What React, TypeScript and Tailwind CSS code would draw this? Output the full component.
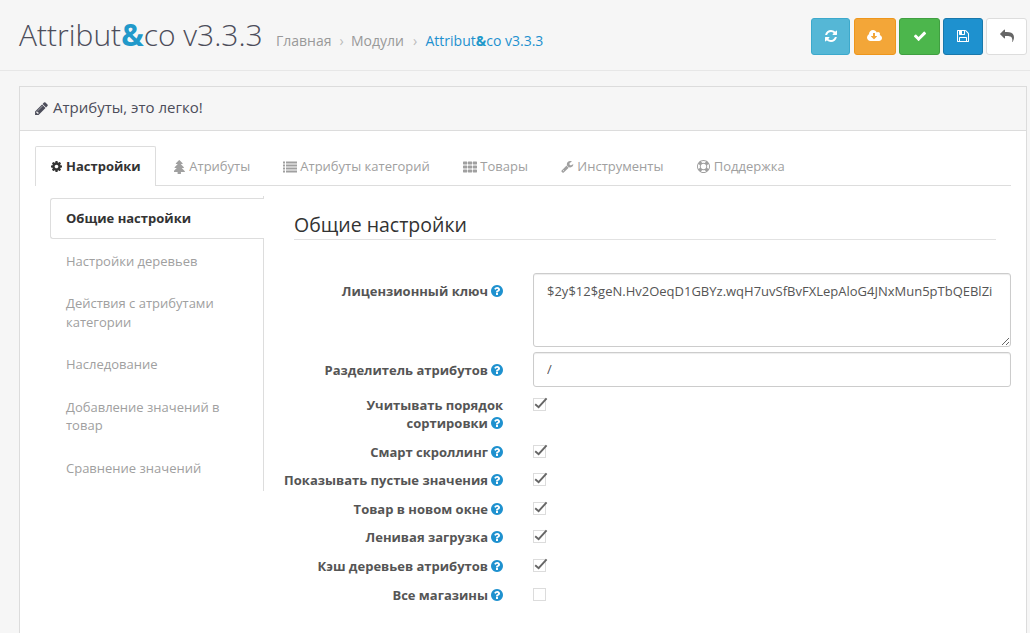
import type { ReactNode } from "react";

const paths = {
  refresh:
    "M1639 1056q0 5-1 7-64 268-268 434.500t-478 166.500q-146 0-282.500-55t-243.500-157l-129 129q-19 19-45 19t-45-19-19-45v-448q0-26 19-45t45-19h448q26 0 45 19t19 45-19 45l-137 137q71 66 161 102t187 36q134 0 250-65t186-179q11-17 53-117 8-23 30-23h192q13 0 22.500 9.500t9.500 22.500zm25-800v448q0 26-19 45t-45 19h-448q-26 0-45-19t-19-45 19-45l138-138q-148-137-349-137-134 0-250 65t-186 179q-11 17-53 117-8 23-30 23h-199q-13 0-22.500-9.500t-9.500-22.500v-7q65-268 270-434.500t480-166.500q146 0 284 55.500t245 156.500l130-129q19-19 45-19t45 19 19 45z",
  download:
    "M1216 928q0-14-9-23t-23-9h-224v-352q0-13-9.500-22.500t-22.500-9.500h-192q-13 0-22.500 9.500t-9.500 22.500v352h-224q-13 0-22.500 9.500t-9.500 22.500q0 14 9 23l352 352q9 9 23 9t23-9l351-351q10-12 10-24zm640 224q0 159-112.500 271.500t-271.500 112.500h-1088q-185 0-316.500-131.500t-131.500-316.500q0-130 70-240t188-165q-2-30-2-43 0-212 150-362t362-150q156 0 285.500 87t188.500 231q71-62 166-62 106 0 181 75t75 181q0 76-41 138 130 31 213.500 135.500t83.500 238.500z",
  check:
    "M1671 566q0 40-28 68l-724 724-136 136q-28 28-68 28t-68-28l-136-136-362-362q-28-28-28-68t28-68l136-136q28-28 68-28t68 28l294 295 656-657q28-28 68-28t68 28l136 136q28 28 28 68z",
  save: "M512 1536h768v-384h-768v384zm896 0h128v-896q0-14-10-38.500t-20-34.500l-281-281q-10-10-34-20t-39-10v416q0 40-28 68t-68 28h-576q-40 0-68-28t-28-68v-416h-128v1280h128v-416q0-40 28-68t68-28h832q40 0 68 28t28 68v416zm-384-928v-320q0-13-9.500-22.500t-22.500-9.500h-192q-13 0-22.500 9.500t-9.500 22.500v320q0 13 9.500 22.500t22.500 9.500h192q13 0 22.500-9.500t9.500-22.500zm640 32v928q0 40-28 68t-68 28h-1344q-40 0-68-28t-28-68v-1344q0-40 28-68t68-28h928q40 0 88 20t76 48l280 280q28 28 48 76t20 88z",
  reply:
    "M1792 1120q0 166-127 451-3 7-10.500 24t-13.500 30-13 22q-12 17-28 17-15 0-23.500-10t-8.500-25q0-9 2.500-26.500t2.500-23.500q5-68 5-123 0-101-17.500-181t-48.500-138.500-80-101-105.500-69.500-133-42.500-154-21.500-175.500-6h-224v256q0 26-19 45t-45 19-45-19l-512-512q-19-19-19-45t19-45l512-512q19-19 45-19t45 19 19 45v256h224q713 0 875 403 53 134 53 333z",
  pencil:
    "M491 1536l91-91-235-235-91 91v107h128v128h107zm523-928q0-22-22-22-10 0-17 7l-542 542q-7 7-7 17 0 22 22 22 10 0 17-7l542-542q7-7 7-17zm-54-192l416 416-832 832h-416v-416zm683 96q0 53-37 90l-166 166-416-416 166-165q36-38 90-38 53 0 91 38l235 234q37 39 37 91z",
  cog: "M1152 896q0-106-75-181t-181-75-181 75-75 181 75 181 181 75 181-75 75-181zm512-109v222q0 12-8 23t-20 13l-185 28q-19 54-39 91 35 50 107 138 10 12 10 25t-9 23q-27 37-99 108t-94 71q-12 0-26-9l-138-108q-44 23-91 38-16 136-29 186-7 28-36 28h-222q-14 0-24.500-8.500t-11.500-21.500l-28-184q-49-16-90-37l-141 107q-10 9-25 9-14 0-25-11-126-114-165-168-7-10-7-23 0-12 8-23 15-21 51-66.500t54-70.500q-27-50-41-99l-183-27q-13-2-21-12.500t-8-23.500v-222q0-12 8-23t19-13l186-28q14-46 39-92-40-57-107-138-10-12-10-24 0-10 9-23 26-36 98.500-107.500t94.500-71.500q13 0 26 10l138 107q44-23 91-38 16-136 29-186 7-28 36-28h222q14 0 24.500 8.500t11.500 21.500l28 184q49 16 90 37l142-107q9-9 24-9 13 0 25 10 129 119 165 170 7 8 7 22 0 12-8 23-15 21-51 66.500t-54 70.500q26 50 41 98l183 28q13 2 21 12.500t8 23.500z",
  tree: "M1600 1472q0 26-19 45t-45 19h-462q1 17 6 87.500t5 108.500q0 25-18 42.500t-43 17.500h-320q-25 0-43-17.500t-18-42.500q0-38 5-108.500t6-87.500h-462q-26 0-45-19t-19-45 19-45l402-403h-229q-26 0-45-19t-19-45 19-45l402-403h-197q-26 0-45-19t-19-45 19-45l384-384q19-19 45-19t45 19l384 384q19 19 19 45t-19 45-45 19h-197l402 403q19 19 19 45t-19 45-45 19h-229l402 403q19 19 19 45z",
  list: "M0 256h256v256h-256zM384 256h1408v256h-1408zM0 640h256v256h-256zM384 640h1408v256h-1408zM0 1024h256v256h-256zM384 1024h1408v256h-1408zM0 1408h256v256h-256zM384 1408h1408v256h-1408z",
  grid: "M60 256h420q60 0 60 60v264q0 60-60 60h-420q-60 0-60-60v-264q0-60 60-60zM686 256h420q60 0 60 60v264q0 60-60 60h-420q-60 0-60-60v-264q0-60 60-60zM1312 256h420q60 0 60 60v264q0 60-60 60h-420q-60 0-60-60v-264q0-60 60-60zM60 768h420q60 0 60 60v264q0 60-60 60h-420q-60 0-60-60v-264q0-60 60-60zM686 768h420q60 0 60 60v264q0 60-60 60h-420q-60 0-60-60v-264q0-60 60-60zM1312 768h420q60 0 60 60v264q0 60-60 60h-420q-60 0-60-60v-264q0-60 60-60zM60 1280h420q60 0 60 60v264q0 60-60 60h-420q-60 0-60-60v-264q0-60 60-60zM686 1280h420q60 0 60 60v264q0 60-60 60h-420q-60 0-60-60v-264q0-60 60-60zM1312 1280h420q60 0 60 60v264q0 60-60 60h-420q-60 0-60-60v-264q0-60 60-60z",
  wrench:
    "M448 1472q0-26-19-45t-45-19-45 19-19 45 19 45 45 19 45-19 19-45zm644-420l-682 682q-37 37-90 37-52 0-91-37l-106-108q-38-36-38-90 0-53 38-91l681-681q39 98 114.500 173.500t173.500 114.500zm634-435q0 39-23 106-47 134-164.500 217.500t-258.500 83.500q-185 0-316.500-131.500t-131.500-316.500 131.500-316.500 316.500-131.500q58 0 121.500 16.500t107.500 46.500q16 11 16 28t-16 28l-293 169v224l193 107q5-3 79-48.500t135.500-81 70.500-35.500q15 0 23.500 10t8.500 25z",
  ring: "M896 0q182 0 348 71t286 191 191 286 71 348-71 348-191 286-286 191-348 71-348-71-286-191-191-286-71-348 71-348 191-286 286-191 348-71zm0 128q-190 0-361 90l194 194q82-28 167-28t167 28l194-194q-171-90-361-90zm-678 1129l194-194q-28-82-28-167t28-167l-194-194q-90 171-90 361t90 361zm678 407q190 0 361-90l-194-194q-82 28-167 28t-167-28l-194 194q171 90 361 90zm0-384q159 0 271.500-112.500t112.500-271.500-112.500-271.500-271.500-112.500-271.500 112.500-112.500 271.500 112.500 271.500 271.500 112.500zm484-217l194 194q90-171 90-361t-90-361l-194 194q28 82 28 167t-28 167z",
  question:
    "M1024 1376v-192q0-14-9-23t-23-9h-192q-14 0-23 9t-9 23v192q0 14 9 23t23 9h192q14 0 23-9t9-23zm256-672q0-88-55.500-163t-138.500-116-170-41q-243 0-371 213-15 24 8 42l132 100q7 6 19 6 16 0 25-12 53-68 86-92 34-24 86-24 48 0 85.500 26t37.500 59q0 38-20 61t-68 45q-63 28-115.500 86.500t-52.500 125.500v36q0 14 9 23t23 9h192q14 0 23-9t9-23q0-19 21.500-49.500t54.500-49.500q32-18 49-28.500t46-35 44.500-48 28-60.500 12.500-81zm384 192q0 209-103 385.500t-279.500 279.500-385.500 103-385.500-103-279.500-279.500-103-385.500 103-385.500 279.500-279.500 385.500-103 385.500 103 279.500 279.500 103 385.500z",
};

type IconName = keyof typeof paths;

function Icon({ name, box = "0 0 1792 1792", className = "" }: { name: IconName; box?: string; className?: string }) {
  return (
    <svg viewBox={box} fill="currentColor" className={`shrink-0 ${className}`}>
      <path d={paths[name]} />
    </svg>
  );
}

const actions: { icon: IconName; box: string; size: string; tone: string }[] = [
  { icon: "refresh", box: "128 0 1536 1792", size: "h-[14px] w-[12px]", tone: "w-[39px] bg-[#55b7d6] border-[#3ca9cc] text-white" },
  { icon: "download", box: "-64 0 1920 1792", size: "h-[14px] w-[15px] mr-px", tone: "w-[42px] bg-[#f3a638] border-[#ee961c] text-white" },
  { icon: "check", box: "0 0 1792 1792", size: "h-[14px] w-[14px]", tone: "w-[41px] bg-[#4cb64c] border-[#409f41] text-white" },
  { icon: "save", box: "128 0 1536 1792", size: "h-[14px] w-[12px]", tone: "w-[40px] bg-[#1e91cf] border-[#1978ab] text-white" },
  { icon: "reply", box: "0 0 1792 1792", size: "h-[14px] w-[14px]", tone: "w-[41px] bg-white border-[#dddddd] text-[#666666]" },
];
const actionGaps = ["", "ml-1", "ml-[3px]", "ml-[3px]", "ml-[3px]"];

const tabs: { label: string; icon: IconName; box: string; size: string; width: string }[] = [
  { label: "Атрибуты", icon: "tree", box: "192 0 1408 1792", size: "h-[14px] w-[11px] mr-[4px]", width: "w-[109px]" },
  { label: "Атрибуты категорий", icon: "list", box: "0 64 1792 1792", size: "h-[14px] w-[14px] mr-[3px]", width: "w-[180px]" },
  { label: "Товары", icon: "grid", box: "0 64 1792 1792", size: "h-[14px] w-[14px] mr-[3px]", width: "w-[98px]" },
  { label: "Инструменты", icon: "wrench", box: "64 0 1728 1792", size: "h-[13px] w-[13px] mr-[3px]", width: "w-[136px]" },
  { label: "Поддержка", icon: "ring", box: "0 0 1792 1792", size: "h-[13px] w-[13px] mr-[3.5px]", width: "w-[121px]" },
];

const sections: { lines: string[]; height: string }[] = [
  { lines: ["Настройки деревьев"], height: "h-[42px]" },
  { lines: ["Действия с атрибутами", "категории"], height: "h-[61px]" },
  { lines: ["Наследование"], height: "h-[42.7px]" },
  { lines: ["Добавление значений в", "товар"], height: "h-[61.3px]" },
  { lines: ["Сравнение значений"], height: "h-[41px]" },
];

const toggles: { label: string; height: string; checked: boolean }[] = [
  { label: "Смарт скроллинг", height: "h-[28px]", checked: true },
  { label: "Показывать пустые значения", height: "h-[29px]", checked: true },
  { label: "Товар в новом окне", height: "h-[28px]", checked: true },
  { label: "Ленивая загрузка", height: "h-[29px]", checked: true },
  { label: "Кэш деревьев атрибутов", height: "h-[29px]", checked: true },
  { label: "Все магазины", height: "h-[28px]", checked: false },
];

function Help() {
  return <Icon name="question" box="128 128 1536 1536" className="-mr-[0.4px] ml-[3.4px] inline-block size-3 align-[-1.3px] text-[#1e91cf]" />;
}

function Label({ children }: { children: ReactNode }) {
  return (
    <div className="w-[240px] shrink-0 text-right text-[13px] leading-[18px] font-bold whitespace-nowrap text-[#555555]">
      {children}
      <Help />
    </div>
  );
}

function Check({ checked }: { checked: boolean }) {
  return (
    <svg viewBox="0 0 16 16" className="ml-[30px] size-4 shrink-0" fill="none">
      <rect x="0.5" y="2.5" width="12" height="12" fill="#fff" stroke="#dcdcdc" />
      {checked && <path d="M2.2 8.3 5.6 11.2 13.6 2.3" stroke="#666" strokeWidth="1.9" />}
    </svg>
  );
}

export default function App() {
  return (
    <div className="flex h-[633px] w-[1030px] flex-col overflow-hidden bg-[#f6f6f6] font-['Open_Sans','Noto_Sans',sans-serif] text-[13px] text-[#666666]">
      <header className="flex h-[71px] shrink-0 border-b border-[#e7e7e7] pr-[3px] pl-[19px]">
        <h1 className="w-[257px] pt-[15px] text-[30px] leading-[40px] font-light whitespace-nowrap text-[#4c4d5a]">
          Attribut<b className="font-bold text-[#2199ca]">&amp;</b>co v3.3.3
        </h1>
        <nav className="flex pt-[31px] text-[14px] leading-5 whitespace-nowrap text-[#999999]">
          <span className="w-[56px]">Главная</span>
          <span className="w-[19px] text-center text-[#bbbbbb]">›</span>
          <span className="w-[54px]">Модули</span>
          <span className="w-[20px] text-center text-[#bbbbbb]">›</span>
          <span className="ml-[0.5px] text-[#1e91cf]">
            Attribut<b className="text-[#2199ca]">&amp;</b>co v3.3.3
          </span>
        </nav>
        <div className="ml-auto flex pt-[18px]">
          {actions.map((a, i) => (
            <button key={a.icon} className={`flex h-[37px] items-center justify-center rounded-[3px] border pb-px ${a.tone} ${actionGaps[i]}`}>
              <Icon name={a.icon} box={a.box} className={a.size} />
            </button>
          ))}
        </div>
      </header>

      <main className="mt-[15px] ml-[19px] flex w-[1008px] flex-1 flex-col border border-b-0 border-[#dcdcdc] bg-white">
        <div className="flex h-[44px] shrink-0 items-center border-b border-[#dcdcdc] bg-[#f6f6f6] pl-[15px] text-[15px] text-[#4c4d5a]">
          <Icon name="pencil" box="128 0 1536 1792" className="mr-[5px] mb-px h-[15px] w-[13px]" />
          <h3 className="pb-[2px]">Атрибуты, это легко!</h3>
        </div>

        <div className="mt-[15px] mr-[15px] ml-[15px] flex h-[40px] shrink-0 text-[#a0a0a0]">
          <div className="flex w-[121px] items-center rounded-t-[2px] border border-b-0 border-[#dddddd] pl-[15px] font-bold whitespace-nowrap text-[#333333]">
            <Icon name="cog" box="128 0 1536 1792" className="mr-1 h-[13px] w-[11px]" />
            Настройки
          </div>
          <div className="flex flex-1 items-center border-b border-[#dddddd] pl-[18.3px]">
            {tabs.map((t) => (
              <div key={t.label} className={`flex items-center pt-[2px] whitespace-nowrap ${t.width}`}>
                <Icon name={t.icon} box={t.box} className={t.size} />
                <span>{t.label}</span>
              </div>
            ))}
          </div>
        </div>

        <div className="flex flex-1 pl-[30px]">
          <aside className="mt-[10px] w-[214px] shrink-0 leading-[18.5px] text-[#a0a0a0]">
            <div className="flex justify-end">
              <div className="h-[2px] w-px bg-[#dddddd]" />
            </div>
            <div className="flex h-[41px] items-center rounded-l-[3px] border border-r-0 border-[#dddddd] pl-[15px] font-bold text-[#333333]">
              Общие настройки
            </div>
            <div className="h-[252px] border-r border-[#dddddd] pt-[13px] pl-4 whitespace-nowrap">
              {sections.map((s) => (
                <div key={s.lines[0]} className={s.height}>
                  {s.lines.map((line) => (
                    <div key={line}>{line}</div>
                  ))}
                </div>
              ))}
            </div>
          </aside>

          <section className="flex-1 pl-[30px]">
            <h2 className="mt-[25px] h-[29px] w-[702px] border-b border-[#e2e2e2] text-[19.5px] leading-[28px] text-[#333333]">
              Общие настройки
            </h2>
            <div className="-ml-[31px]">
              <div className="mt-[33px] flex">
                <div className="pt-[9px]">
                  <Label>Лицензионный ключ</Label>
                </div>
                <textarea
                  className="ml-[30px] h-[74px] w-[478px] resize rounded-[3px] border border-[#cccccc] bg-white px-[13px] py-2 text-[13px] leading-[19px] text-[#555555] shadow-[inset_0_1px_1px_rgba(0,0,0,0.075)] outline-none"
                  defaultValue="$2y$12$geN.Hv2OeqD1GBYz.wqH7uvSfBvFXLepAloG4JNxMun5pTbQEBlZi"
                />
              </div>
              <div className="mt-[5px] flex">
                <div className="pt-[9px]">
                  <Label>Разделитель атрибутов</Label>
                </div>
                <input
                  className="ml-[30px] h-[35px] w-[478px] rounded-[3px] border border-[#cccccc] bg-white px-[13px] pb-px text-[13px] text-[#555555] shadow-[inset_0_1px_1px_rgba(0,0,0,0.075)] outline-none"
                  defaultValue="/"
                />
              </div>
              <div className="mt-[9px] flex h-[47px]">
                <Label>
                  Учитывать порядок
                  <br />
                  сортировки
                </Label>
                <Check checked />
              </div>
              {toggles.map((t) => (
                <div key={t.label} className={`flex ${t.height}`}>
                  <Label>{t.label}</Label>
                  <Check checked={t.checked} />
                </div>
              ))}
            </div>
          </section>
        </div>
      </main>
    </div>
  );
}
